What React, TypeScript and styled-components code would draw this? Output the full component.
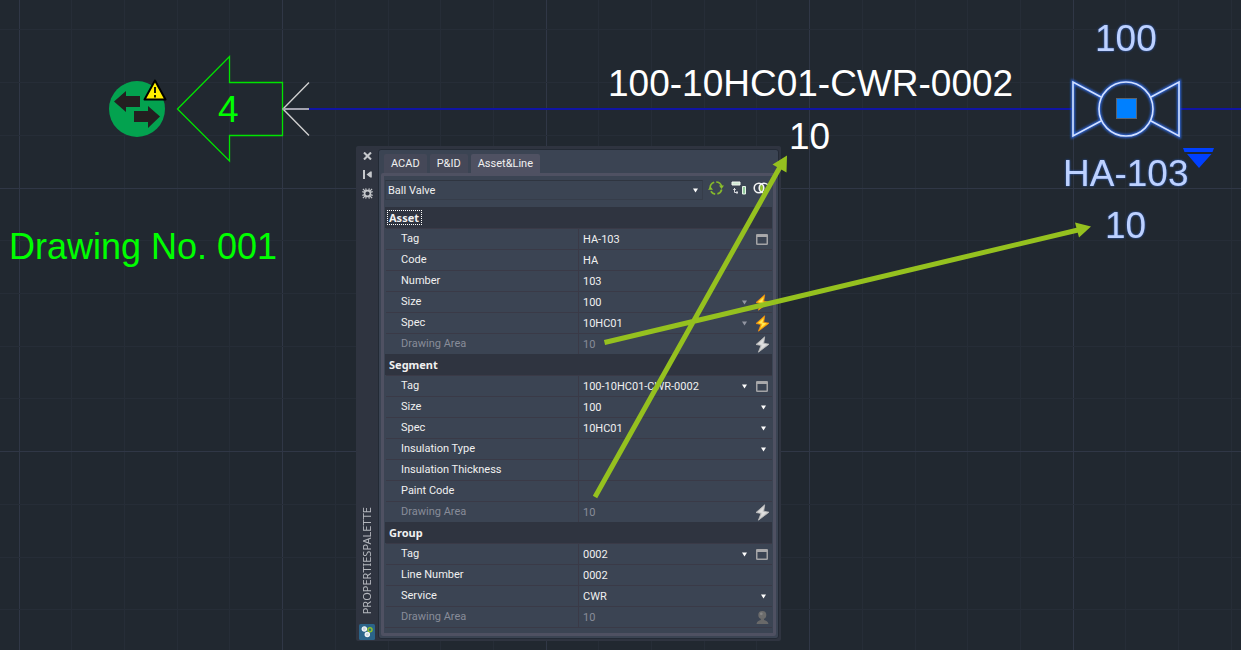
import React from "react";
import styled, { createGlobalStyle, css } from "styled-components";

const color = {
  canvas: "#212830",
  gridMinor: "#262d37",
  gridMajor: "#303746",
  shell: "#2f3440",
  panel: "#3b4453",
  panelEdge: "#232a35",
  frame: "#4f5162",
  tab: "#454858",
  rule: "#3a3a47",
  text: "#f0f0f0",
  muted: "#888c99",
  arrow: "#95c11f",
  cad: "#00ff00",
  selected: "#bdd1ff",
};

const headingFont = `"Noto Sans", "Open Sans", sans-serif`;

const GlobalStyle = createGlobalStyle`
  *, *::before, *::after { box-sizing: border-box; }
  body {
    margin: 0;
    background: ${color.canvas};
    font-family: Roboto, "Noto Sans", sans-serif;
  }
`;

/* ---------- drawing canvas ---------- */

const Canvas = styled.main`
  position: relative;
  min-height: 100vh;
  overflow: hidden;
  padding: 146px 0 9px 356px;
`;

const Layer = styled.svg`
  position: absolute;
  inset: 0;
  width: 100%;
  height: 100%;
  pointer-events: none;
`;

const CadText = styled.text<{ $fill: string; $glow?: boolean; $size?: number }>`
  font-family: "Liberation Sans", Arial, sans-serif;
  font-size: ${(p) => p.$size ?? 37}px;
  fill: ${(p) => p.$fill};
  ${(p) =>
    p.$glow &&
    css`
      filter: drop-shadow(0 0 1px #2f62c8);
    `}
`;

/* ---------- palette window ---------- */

const Palette = styled.section`
  position: relative;
  display: flex;
  width: 425px;
  padding: 0 2px 1px 0;
  background: ${color.shell};
  border-radius: 2px;
`;

const Rail = styled.div`
  display: flex;
  flex-direction: column;
  align-items: center;
  width: 22px;
  flex: none;
`;

const RailButton = styled.button`
  display: grid;
  place-items: center;
  width: 22px;
  height: 19px;
  margin: 0;
  padding: 0;
  border: 0;
  background: none;
  color: #c6c8cc;
`;

const RailTitle = styled.h1`
  margin: auto 0 10px;
  font-family: ${headingFont};
  font-size: 11px;
  font-weight: 400;
  line-height: 16px;
  color: #b4b7bd;
  writing-mode: vertical-rl;
  transform: rotate(180deg);
`;

const Body = styled.div`
  flex: 1;
  min-width: 0;
  margin: 3px 0 1px;
  padding: 4px 2px 2px;
  background: ${color.panel};
  border: 1px solid ${color.panelEdge};
  border-radius: 3px;
`;

const Tabs = styled.div`
  display: flex;
  gap: 3px;
  padding-left: 3px;
`;

const Tab = styled.button<{ $active?: boolean }>`
  height: 19px;
  padding: 0 7px;
  border: 0;
  border-radius: 2px 2px 0 0;
  background: ${(p) => (p.$active ? color.frame : color.tab)};
  color: ${color.text};
  font: inherit;
  font-size: 11px;
  line-height: 19px;
`;

const Frame = styled.div`
  padding: 4px 1px 5px;
  border: 3px solid ${color.frame};
  border-radius: 2px;
  background: ${color.panel};
`;

const Toolbar = styled.div`
  display: flex;
  height: 20px;
  margin-bottom: 7px;
`;

const TypeBox = styled.label`
  display: flex;
  align-items: center;
  flex: 1;
  height: 20px;
  padding-left: 2px;
  border: 1px solid #363d4a;
  border-top-color: #2f3540;
  color: ${color.text};
`;

const fieldStyle = css`
  appearance: none;
  flex: 1;
  min-width: 0;
  height: 18px;
  margin: 0;
  padding: 0;
  border: 0;
  outline: 0;
  background: none;
  color: inherit;
  font: inherit;
  font-size: 11px;
  opacity: 1;
`;

const Select = styled.select`
  ${fieldStyle}
`;

const Input = styled.input`
  ${fieldStyle}
`;

const ToolButtons = styled.div`
  display: flex;
  gap: 6px;
  padding: 0 2px 0 4px;
`;

const IconButton = styled.button`
  display: grid;
  place-items: center;
  width: 17px;
  height: 16px;
  padding: 0;
  border: 0;
  background: none;
`;

const Groups = styled.div`
  border-bottom: 1px solid ${color.rule};
`;

const Group = styled.section``;

const GroupHeader = styled.h2`
  display: flex;
  align-items: center;
  height: 21px;
  margin: 0;
  padding-left: 2px;
  background: ${color.shell};
  color: ${color.text};
  font-family: ${headingFont};
  font-size: 11px;
  font-weight: 700;
`;

const GroupName = styled.span<{ $focused?: boolean }>`
  padding: 0 2px 0 1px;
  border: 1px ${(p) => (p.$focused ? "dotted #ffffff" : "solid transparent")};
  line-height: 13px;
`;

const Row = styled.div<{ $muted?: boolean }>`
  display: flex;
  align-items: center;
  height: 21px;
  margin-left: 1px;
  border-top: 1px solid ${color.rule};
  color: ${(p) => (p.$muted ? color.muted : color.text)};
`;

const RowLabel = styled.label`
  width: 193px;
  height: 20px;
  flex: none;
  padding-left: 15px;
  border-right: 1px solid ${color.rule};
  font-size: 11px;
  line-height: 20px;
`;

const RowValue = styled.div`
  display: flex;
  align-items: center;
  flex: 1;
  min-width: 0;
  padding: 0 2px 0 4px;
`;

const Caret = styled.svg`
  flex: none;
  width: 13px;
  height: 5px;
`;

const RowIcon = styled.span`
  display: grid;
  place-items: center;
  flex: none;
  width: 16px;
  height: 18px;
  margin-left: 3px;
`;

/* ---------- icons ---------- */

const CaretIcon = ({ dim }: { dim?: boolean }) => (
  <Caret viewBox="0 0 13 5" aria-hidden="true">
    <path d="M4 .5h5L6.500 4.500z" fill={dim ? "#9296a2" : "#ffffff"} />
  </Caret>
);

const WindowIcon = () => (
  <svg width="12" height="11" viewBox="0 0 12 11" aria-hidden="true">
    <rect x=".75" y=".75" width="10.500" height="9.500" rx=".6" fill="none" stroke="#a3a3a6" strokeWidth="1.500" />
    <path d="M.5.500h11v2.500H.500z" fill="#a9a9ab" />
  </svg>
);

const BoltIcon = ({ gray }: { gray?: boolean }) => (
  <svg width="15" height="17" viewBox="0 0 15 17" aria-hidden="true">
    <path
      d="M9.700.800 1 8.500l5 .9-2.600 6.800L14 8.200l-5.300-1z"
      fill={gray ? "#d2d2d2" : "#ffc20c"}
      stroke={gray ? "#bcbcbc" : "#f28a13"}
      strokeWidth=".8"
      strokeLinejoin="round"
    />
    <path d="M8.600 3.500 3.500 8l4 .7-1.600 4L11.300 8.600 7.200 7.800z" fill={gray ? "#e0e0e0" : "#ffe95c"} />
  </svg>
);

const PawnIcon = () => (
  <svg width="13" height="15" viewBox="0 0 13 15" aria-hidden="true">
    <circle cx="6.300" cy="5" r="4" fill="#6c6c6c" />
    <path d="M4.800 8h3.200v2c2 .6 4 1.200 4.500 4H.500c.4-2.800 2.300-3.400 4.300-4z" fill="#696969" />
    <circle cx="5.300" cy="3.800" r="1.400" fill="#858585" />
  </svg>
);

const RefreshIcon = () => (
  <svg width="16" height="16" viewBox="0 0 16 16" aria-hidden="true">
    <g fill="none" stroke="#86b82c" strokeWidth="1.700">
      <path d="M2.900 11.200A6 6 0 0 0 7.200 14.100M9.400 13.900A6 6 0 0 0 13.700 9.500" />
      <path d="M2.100 8A6 6 0 0 1 6.200 2.300M8.200 2A6 6 0 0 1 13.600 6" />
    </g>
    <path d="M0 9.800 2.500 6.500 5 9.800zM11 5.500h5l-2.500 3.500z" fill="#8cc02c" />
  </svg>
);

const AlignIcon = () => (
  <svg width="16" height="14" viewBox="0 0 16 14" aria-hidden="true">
    <path d="M1 1h8v3H1z" fill="#cfe8d2" stroke="#f3f7f3" />
    <path d="M11.500 5.500h3v7.500h-3z" fill="#8fc79a" stroke="#e6f3e7" />
    <path d="M3.500 7v4.500H7M2.200 8.500h2.600M6 10v3" fill="none" stroke="#d8dade" />
  </svg>
);

const RingsIcon = () => (
  <svg width="17" height="12" viewBox="0 0 17 12" aria-hidden="true">
    <path d="M8.500 2a5 5 0 0 1 0 8 5 5 0 0 1 0-8z" fill="#8cc02c" />
    <circle cx="6" cy="6" r="4.800" fill="none" stroke="#f4f4f4" strokeWidth="1.600" />
    <circle cx="11" cy="6" r="4.800" fill="none" stroke="#f4f4f4" strokeWidth="1.600" />
  </svg>
);

const CloseIcon = () => (
  <svg width="9" height="8" viewBox="0 0 9 8" aria-hidden="true">
    <path d="m1 .5 7 7m0-7-7 7" stroke="currentColor" strokeWidth="2.100" />
  </svg>
);

const PinIcon = () => (
  <svg width="9" height="9" viewBox="0 0 9 9" aria-hidden="true">
    <path d="M0 0h2v9H0zM7.300 1.500h1.500v6H7.300zM7.300 1.500v6L3.500 4.500z" fill="currentColor" />
  </svg>
);

const GearIcon = () => (
  <svg width="11" height="11" viewBox="0 0 11 11" aria-hidden="true">
    <circle cx="5.500" cy="5.500" r="2.900" fill="none" stroke="currentColor" strokeWidth="1.600" />
    <path
      d="M3.700.3l.6 2.500M7.300.3l-.6 2.500M3.700 10.700l.6-2.500M7.300 10.700l-.6-2.500M.3 3.700l2.500.6M.3 7.300l2.500-.6M10.700 3.700l-2.500.6M10.700 7.300l-2.500-.6M.9.900l2.200 2.200M10.100.900 7.900 3.100M.9 10.100l2.200-2.200M10.100 10.100 7.900 7.900"
      stroke="currentColor"
      strokeWidth="1.200"
    />
  </svg>
);

const AppIcon = () => (
  <svg width="16" height="16" viewBox="0 0 16 16" aria-hidden="true">
    <rect width="16" height="16" rx="1.500" fill="#2b6489" />
    <circle cx="5.300" cy="5" r="2.100" fill="#c9d6de" stroke="#f3f6f8" strokeWidth="1.300" />
    <circle cx="11" cy="5.800" r="2" fill="#2b6489" stroke="#8cc02c" strokeWidth="1.500" />
    <circle cx="8.300" cy="10.600" r="2.100" fill="#c9d6de" stroke="#f3f6f8" strokeWidth="1.300" />
  </svg>
);

/* ---------- data ---------- */

type Field = {
  label: string;
  value: string;
  list?: "on" | "dim";
  icon?: "window" | "bolt" | "boltGray" | "pawn";
  muted?: boolean;
};

const groups: { name: string; focused?: boolean; fields: Field[] }[] = [
  {
    name: "Asset",
    focused: true,
    fields: [
      { label: "Tag", value: "HA-103", icon: "window" },
      { label: "Code", value: "HA" },
      { label: "Number", value: "103" },
      { label: "Size", value: "100", list: "dim", icon: "bolt" },
      { label: "Spec", value: "10HC01", list: "dim", icon: "bolt" },
      { label: "Drawing Area", value: "10", icon: "boltGray", muted: true },
    ],
  },
  {
    name: "Segment",
    fields: [
      { label: "Tag", value: "100-10HC01-CWR-0002", list: "on", icon: "window" },
      { label: "Size", value: "100", list: "on" },
      { label: "Spec", value: "10HC01", list: "on" },
      { label: "Insulation Type", value: "", list: "on" },
      { label: "Insulation Thickness", value: "" },
      { label: "Paint Code", value: "" },
      { label: "Drawing Area", value: "10", icon: "boltGray", muted: true },
    ],
  },
  {
    name: "Group",
    fields: [
      { label: "Tag", value: "0002", list: "on", icon: "window" },
      { label: "Line Number", value: "0002" },
      { label: "Service", value: "CWR", list: "on" },
      { label: "Drawing Area", value: "10", icon: "pawn", muted: true },
    ],
  },
];

const rowIcons = {
  window: <WindowIcon />,
  bolt: <BoltIcon />,
  boltGray: <BoltIcon gray />,
  pawn: <PawnIcon />,
};

const PropertyRow = ({ group, field }: { group: string; field: Field }) => {
  const id = `${group}-${field.label}`.replace(/\s/g, "-").toLowerCase();
  return (
    <Row $muted={field.muted}>
      <RowLabel htmlFor={id}>{field.label}</RowLabel>
      <RowValue>
        {field.list ? (
          <Select id={id} defaultValue={field.value}>
            <option value={field.value}>{field.value}</option>
          </Select>
        ) : (
          <Input id={id} defaultValue={field.value} readOnly={field.muted} />
        )}
        {field.list && <CaretIcon dim={field.list === "dim"} />}
        {field.icon && <RowIcon>{rowIcons[field.icon]}</RowIcon>}
      </RowValue>
    </Row>
  );
};

/* ---------- drawing ---------- */

const GRID = 52.7;
const gridX = (i: number) => Math.round(18.6 + i * GRID) + 0.5;
const gridY = (i: number) => Math.round(187.6 + i * GRID) + 0.5;
const columns = Array.from({ length: 60 }, (_, i) => i);
const rows = Array.from({ length: 40 }, (_, i) => i - 3);

const Grid = () => (
  <g>
    {columns.map((i) => (
      <line key={`x${i}`} x1={gridX(i)} x2={gridX(i)} y1="0" y2="100%" stroke={i % 5 ? color.gridMinor : color.gridMajor} />
    ))}
    {rows.map((i) => (
      <line key={`y${i}`} x1="0" x2="100%" y1={gridY(i)} y2={gridY(i)} stroke={i % 5 ? color.gridMinor : color.gridMajor} />
    ))}
  </g>
);

const valvePath = "M1101 97 1073 82V136L1101 121M1151 97 1179 82V136L1151 121";

const Drawing = () => (
  <Layer>
    <defs>
      <filter id="glow" x="-20%" y="-20%" width="140%" height="140%">
        <feGaussianBlur stdDeviation="1" />
      </filter>
    </defs>
    <Grid />

    <path d="M309 109H1073M1179 109H4000" stroke="#1014a4" strokeWidth="2" />

    <circle cx="137" cy="109" r="28" fill="#03a24f" />
    <path d="M114 101.500 126 91v5h14v11h-14v5zM160 116.500 148 106v5h-14v11h14v6z" fill="#231f20" />
    <path d="M155 80.500 144.500 99.500h21z" fill="#ffee00" stroke="#000" strokeWidth="2" strokeLinejoin="round" />
    <path d="M155 87v6M155 95v2.500" stroke="#000" strokeWidth="1.800" />

    <path
      d="M177.500 109 229.500 56.500V82.500H282.500V135.500H229.500V161z"
      fill="none"
      stroke="#00e400"
      strokeWidth="1.300"
    />
    <path d="M309 82.500 283 109 309 135.500" fill="none" stroke="#cfcfcf" strokeWidth="1.400" />
    <path d="M283 109h26" stroke="#a3a3ae" strokeWidth="2" />

    <CadText x="218" y="122" $fill={color.cad}>4</CadText>
    <CadText x="9" y="259" $fill={color.cad} $size={36}>Drawing No. 001</CadText>
    <CadText x="608" y="96" $fill="#ffffff">100-10HC01-CWR-0002</CadText>
    <CadText x="789" y="149" $fill="#ffffff">10</CadText>

    <g fill="none" stroke="#2b62d6" strokeWidth="4" filter="url(#glow)">
      <path d={valvePath} />
      <circle cx="1126" cy="109" r="27" />
    </g>
    <g fill="none" stroke="#d3e1ff" strokeWidth="1.600">
      <path d={valvePath} />
      <circle cx="1126" cy="109" r="27" />
    </g>
    <rect x="1116.500" y="98.500" width="20" height="20" fill="#0080ff" stroke="#5c6470" />
    <CadText x="1095" y="51" $fill={color.selected} $glow>100</CadText>
    <CadText x="1063" y="186" $fill={color.selected} $glow>HA-103</CadText>
    <CadText x="1105" y="238" $fill={color.selected} $glow>10</CadText>
    <path d="M1183 148h31l-1.500 4h-28zM1187 154h24.500L1199 168z" fill="#0040ff" />
  </Layer>
);

const Callouts = () => (
  <Layer aria-hidden="true">
    <g stroke={color.arrow} strokeWidth="5">
      <path d="M604.500 342.500 1078 230M595 497 780 167" />
    </g>
    <path d="M1091 226.500 1075 222.500 1079 237.500zM787 155.500 772.500 164.500 786.500 172.500z" fill={color.arrow} />
  </Layer>
);

export default function App() {
  return (
    <>
      <GlobalStyle />
      <Canvas>
        <Drawing />
        <Palette>
          <Rail>
            <RailButton aria-label="Close"><CloseIcon /></RailButton>
            <RailButton aria-label="Auto-hide"><PinIcon /></RailButton>
            <RailButton aria-label="Properties"><GearIcon /></RailButton>
            <RailTitle>PROPERTIESPALETTE</RailTitle>
            <AppIcon />
          </Rail>
          <Body>
            <Tabs role="tablist">
              <Tab role="tab">ACAD</Tab>
              <Tab role="tab">P&amp;ID</Tab>
              <Tab role="tab" aria-selected="true" $active>Asset&amp;Line</Tab>
            </Tabs>
            <Frame>
              <Toolbar>
                <TypeBox>
                  <Select aria-label="Object type" defaultValue="Ball Valve">
                    <option>Ball Valve</option>
                  </Select>
                  <CaretIcon />
                </TypeBox>
                <ToolButtons>
                  <IconButton aria-label="Refresh"><RefreshIcon /></IconButton>
                  <IconButton aria-label="Align"><AlignIcon /></IconButton>
                  <IconButton aria-label="Compare"><RingsIcon /></IconButton>
                </ToolButtons>
              </Toolbar>
              <Groups>
                {groups.map((group) => (
                  <Group key={group.name}>
                    <GroupHeader>
                      <GroupName $focused={group.focused}>{group.name}</GroupName>
                    </GroupHeader>
                    {group.fields.map((field) => (
                      <PropertyRow key={field.label} group={group.name} field={field} />
                    ))}
                  </Group>
                ))}
              </Groups>
            </Frame>
          </Body>
        </Palette>
        <Callouts />
      </Canvas>
    </>
  );
}
